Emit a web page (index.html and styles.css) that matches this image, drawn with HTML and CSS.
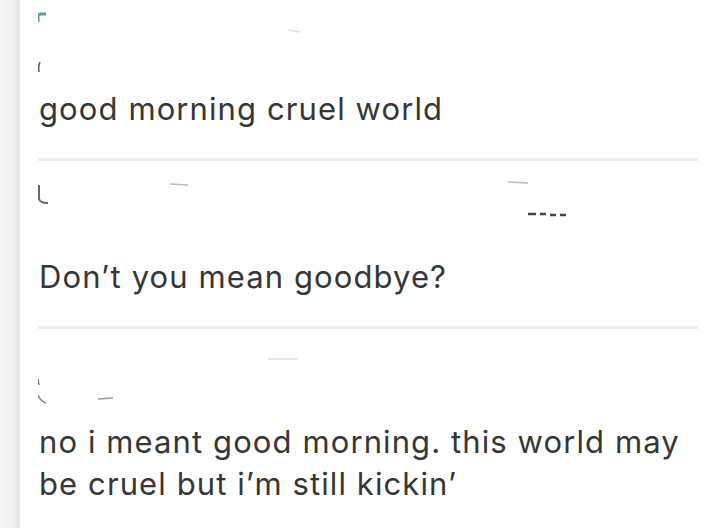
FILE: index.html
```html
<!DOCTYPE html>
<html>
<head>
<meta charset="utf-8">
<link rel="stylesheet" href="styles.css">
</head>
<body>
<div class="page">
  <div class="strip"></div>
  <main class="thread">
    <section class="comment first">
      <svg class="head" width="660" height="88" viewBox="0 0 660 88">
        <path d="M0 22 L0 16 Q0 14 3 14 L8 14" stroke="#5f9e97" stroke-width="3" fill="none"/>
        <path d="M2 62 Q0 66 1 72" stroke="#555" stroke-width="1.5" fill="none"/>
        <path d="M250 30 L262 32" stroke="#ddd" stroke-width="1.5"/>
      </svg>
      <p class="text">good morning cruel world</p>
    </section>
    <section class="comment">
      <svg class="head" width="660" height="95" viewBox="0 0 660 95">
        <path d="M1 24 L1 38 Q2 42 10 42" stroke="#666" stroke-width="2" fill="none"/>
        <path d="M132 23 L150 24" stroke="#bbb" stroke-width="1.5"/>
        <path d="M470 21 L490 22" stroke="#bbb" stroke-width="1.5"/>
        <path d="M490 53 L498 53 M502 53 L508 53 M512 54 L518 54 M522 54 L528 54" stroke="#444" stroke-width="2.5"/>
      </svg>
      <p class="text">Don’t you mean goodbye?</p>
    </section>
    <section class="comment last">
      <svg class="head" width="660" height="92" viewBox="0 0 660 92">
        <path d="M0 50 L1 56" stroke="#777" stroke-width="1.5" fill="none"/>
        <path d="M0 66 Q2 72 8 74" stroke="#888" stroke-width="1.5" fill="none"/>
        <path d="M230 30 L260 30" stroke="#ccc" stroke-width="1"/>
        <path d="M60 70 L75 69" stroke="#999" stroke-width="1.5"/>
      </svg>
      <p class="text">no i meant good morning. this world may be cruel but i’m still kickin’</p>
    </section>
  </main>
</div>
</body>
</html>
```
FILE: styles.css
```css
html, body {
  margin: 0;
  padding: 0;
  background: #ffffff;
}
.page {
  display: flex;
  width: 724px;
  height: 528px;
  overflow: hidden;
}
.strip {
  width: 19px;
  flex: none;
  background: linear-gradient(to right, #f6f6f6 0%, #f1f1f1 70%, #e4e4e4 100%);
  border-right: 1px solid #ececec;
}
.thread {
  flex: 1;
  padding-left: 18px;
  padding-right: 34px;
}
.comment {
  border-bottom: 3px solid #ececec;
  padding-bottom: 28px;
}
.comment.last {
  border-bottom: none;
}
.head {
  display: block;
}
.text {
  margin: 0;
  font-family: Inter, "Liberation Sans", sans-serif;
  font-size: 31px;
  letter-spacing: 1.1px;
  line-height: 42px;
  color: #363636;
  padding-left: 1px;
}
```
